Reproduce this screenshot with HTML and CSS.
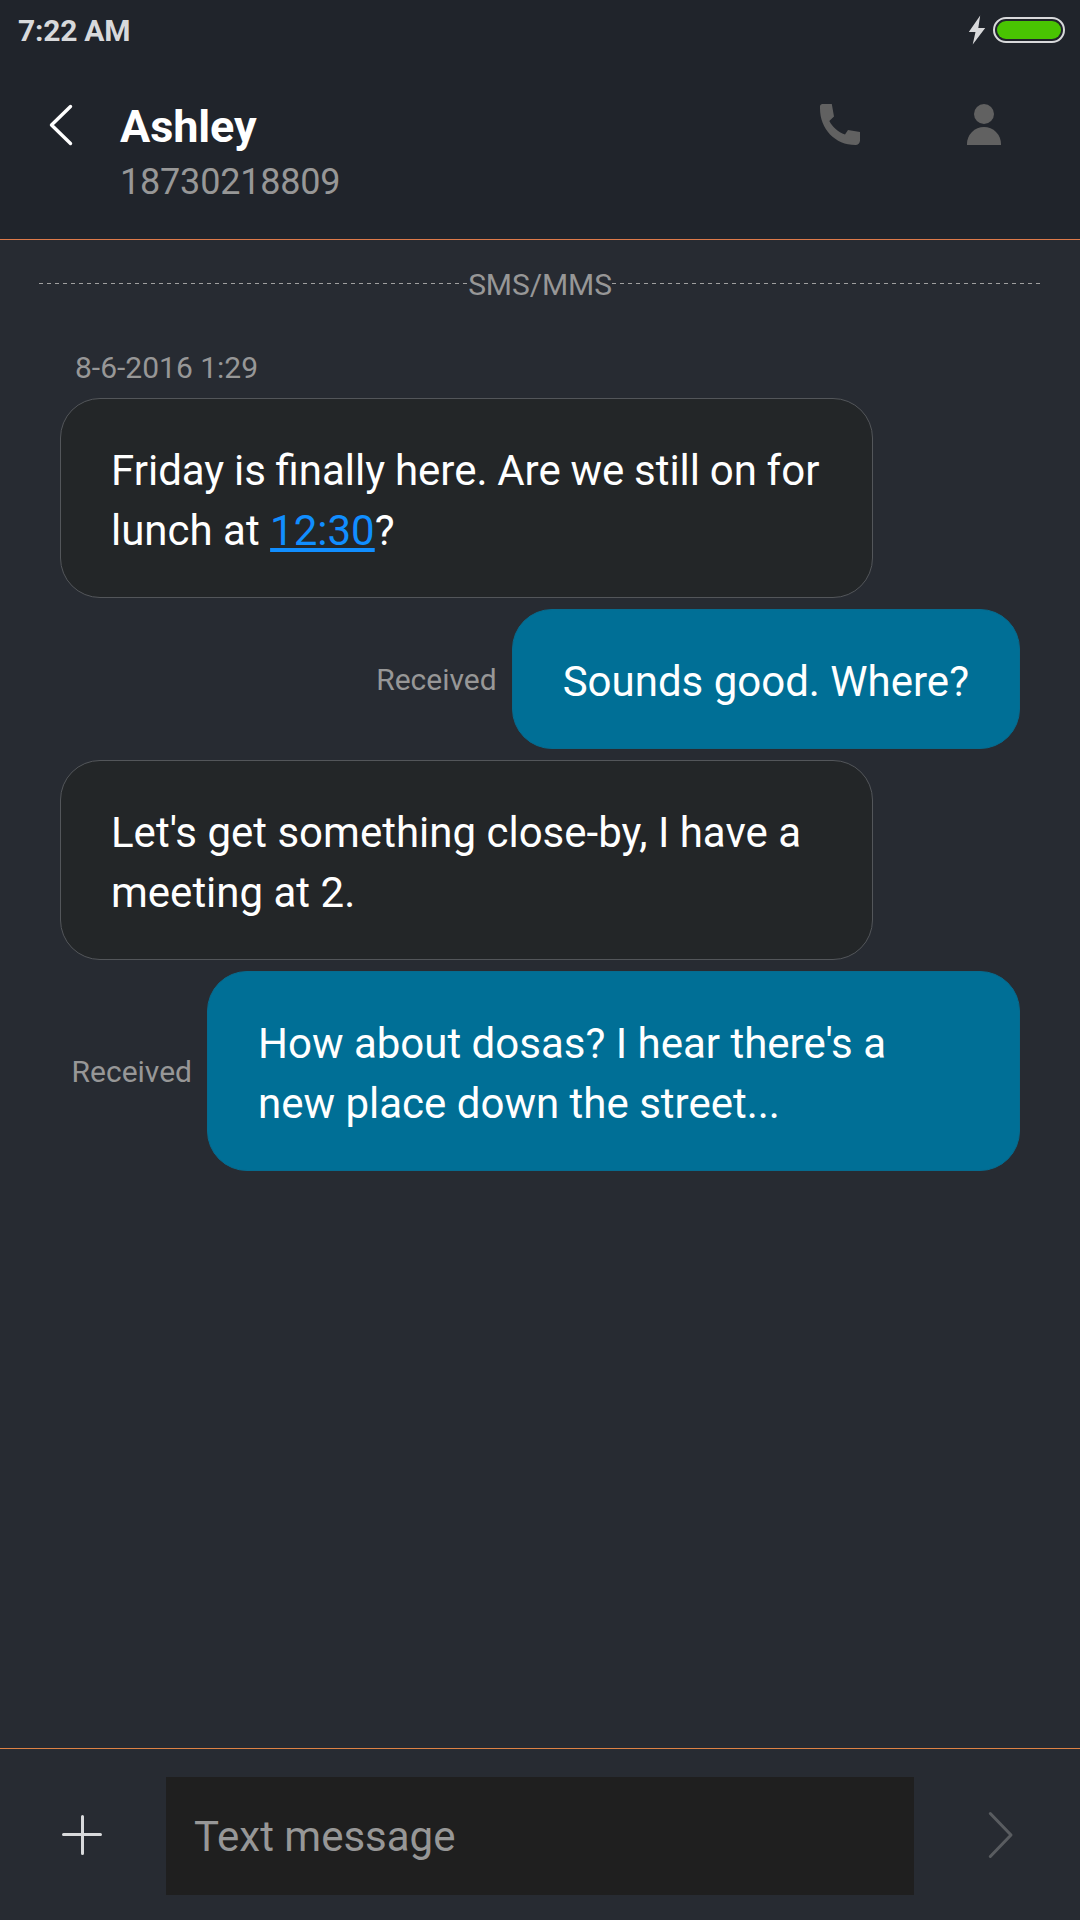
FILE: index.html
```html
<!DOCTYPE html>
<html lang="en">
<head>
    <meta charset="UTF-8">
    <meta name="viewport" content="width=device-width, initial-scale=1.0">
    <title>Ashley - Messaging</title>
    <link rel="stylesheet" href="styles.css">
</head>
<body>
    <div class="phone">
        <header class="header">
            <!-- status bar -->
            <div class="status">
                <span class="time">7:22 AM</span>
                <svg class="bolt" width="18" height="30" viewBox="0 0 18 30">
                    <path d="M12.2 0.5L0.8 17H7.5L4.7 29.5L17.2 13H10.3z" fill="#d8d9db"/>
                </svg>
                <div class="battery"><div class="level"></div></div>
            </div>
            <div class="contact">
                <svg class="back" width="30" height="44" viewBox="0 0 30 44">
                    <path d="M24.5 3.5L5.5 22L24.5 40.5" fill="none" stroke="#fff" stroke-width="3.4" stroke-linecap="round" stroke-linejoin="round"/>
                </svg>
                <div class="who">
                    <h1 class="name">Ashley</h1>
                    <p class="number">18730218809</p>
                </div>
                <svg class="call" width="40" height="41" viewBox="0 0 40 41">
                    <path d="M2.5 0H11.8L14 12.5L9.3 17C12.5 23 18 28 25 30.5L28 26L40 28V36.5C40 39 38 41 35.5 41C15 41 0 25 0 4.5V2.5C0 1 1 0 2.5 0z" fill="#616161"/>
                </svg>
                <svg class="person" width="34" height="41" viewBox="0 0 34 41">
                    <circle cx="17" cy="10" r="10" fill="#616161"/>
                    <path d="M0 41V40a17 17 0 0 1 34 0V41z" fill="#616161"/>
                </svg>
            </div>
        </header>

        <main class="thread">
            <div class="type">
                <svg class="dash" height="1"><line x1="0" y1="0.5" x2="100%" y2="0.5"/></svg>
                <span>SMS/MMS</span>
                <svg class="dash" height="1"><line x1="0" y1="0.5" x2="100%" y2="0.5"/></svg>
            </div>
            <p class="date">8-6-2016 1:29</p>
            <div class="row">
                <div class="bubble wide"><span class="tight">Friday is finally here. Are we still on for</span><br>lunch at <a class="link">12:30</a>?</div>
            </div>
            <div class="row sent">
                <span class="state">Received</span>
                <div class="bubble">Sounds good. Where?</div>
            </div>
            <div class="row">
                <div class="bubble wide">Let's get something close-by, I have a<br>meeting at 2.</div>
            </div>
            <div class="row sent">
                <span class="state">Received</span>
                <div class="bubble wide">How about dosas? I hear there's a<br>new place down the street...</div>
            </div>
        </main>

        <footer class="composer">
            <svg class="plus" width="40" height="40" viewBox="0 0 40 40">
                <path d="M1.5 19.5H38.5M20.5 1.5V38.5" stroke="#d8d9db" stroke-width="3" stroke-linecap="round"/>
            </svg>
            <div class="field">Text message</div>
            <svg class="send" width="26" height="48" viewBox="0 0 26 48">
                <path d="M2.3 2.5L23 24L2.3 45.5" fill="none" stroke="#595c60" stroke-width="3" stroke-linecap="round" stroke-linejoin="round"/>
            </svg>
        </footer>
    </div>
</body>
</html>
```
FILE: styles.css
```css
* {
    margin: 0;
    padding: 0;
    box-sizing: border-box;
}

body {
    font-family: Roboto, sans-serif;
    background: #272b32;
    color: #fff;
}

svg {
    display: block;
    flex: none;
}

.phone {
    width: 1080px;
    height: 1920px;
    display: flex;
    flex-direction: column;
    overflow: hidden;
}

/* header */
.header {
    height: 240px;
    background: #20242b;
    border-bottom: 1px solid #de7a4a;
}

.status {
    height: 60px;
    padding: 0 15px 0 18px;
    display: flex;
    align-items: center;
}

.time {
    flex: 1;
    color: #d8d9db;
    font-size: 30px;
    font-weight: bold;
    letter-spacing: -0.25px;
}

.bolt {
    margin-right: 7px;
}

.battery {
    width: 72px;
    height: 26px;
    padding: 2px;
    border: 2px solid #d8d9db;
    border-radius: 13px;
}

.level {
    height: 18px;
    border-radius: 9px;
    background: #49c402;
}

.contact {
    display: flex;
    padding: 40px 79px 0 46px;
}

.back {
    margin-top: 3px;
}

.who {
    flex: 1;
    margin-left: 44px;
}

.name {
    font-size: 45px;
    line-height: 54px;
    letter-spacing: -0.1px;
}

.number {
    color: #979797;
    font-size: 36px;
    line-height: 56px;
    letter-spacing: -0.2px;
}

.call {
    margin: 4px 107px 0 0;
}

.person {
    margin-top: 4px;
}

/* messages */
.thread {
    flex: 1;
}

.type {
    height: 88px;
    padding: 0 39px;
    display: flex;
    align-items: center;
    color: #979797;
    font-size: 30px;
}

.type span {
    letter-spacing: -0.1px;
}

.dash {
    flex: 1;
    width: 0;
    margin-bottom: 1px;
}

.dash line {
    stroke: #a0a0a0;
    stroke-dasharray: 4 4;
}

.date {
    height: 70px;
    padding-left: 75px;
    color: #979797;
    font-size: 30px;
    line-height: 80px;
}

.row {
    display: flex;
    align-items: center;
    padding: 0 60px;
    margin-bottom: 11px;
}

.bubble {
    padding: 42px 50px 36px;
    border: 1px solid #53565a;
    border-radius: 40px;
    background: #232628;
    font-size: 42px;
    line-height: 60px;
    white-space: nowrap;
}

.wide {
    width: 813px;
}

.tight {
    word-spacing: -0.7px;
}

.link {
    color: #118eff;
    text-decoration: underline;
}

.sent {
    justify-content: flex-end;
}

.sent .bubble {
    border-color: #066b8f;
    background: #006f96;
}

.state {
    margin-right: 15px;
    color: #979797;
    font-size: 30px;
}

/* input bar */
.composer {
    height: 172px;
    padding: 0 66px 0 62px;
    border-top: 1px solid #de8245;
    display: flex;
    align-items: center;
}

.field {
    width: 748px;
    height: 118px;
    margin: 2px 0 0 64px;
    padding-left: 28px;
    background: #1f1f1f;
    color: #979797;
    font-size: 42px;
    line-height: 120px;
}

.send {
    margin-left: auto;
}
```
